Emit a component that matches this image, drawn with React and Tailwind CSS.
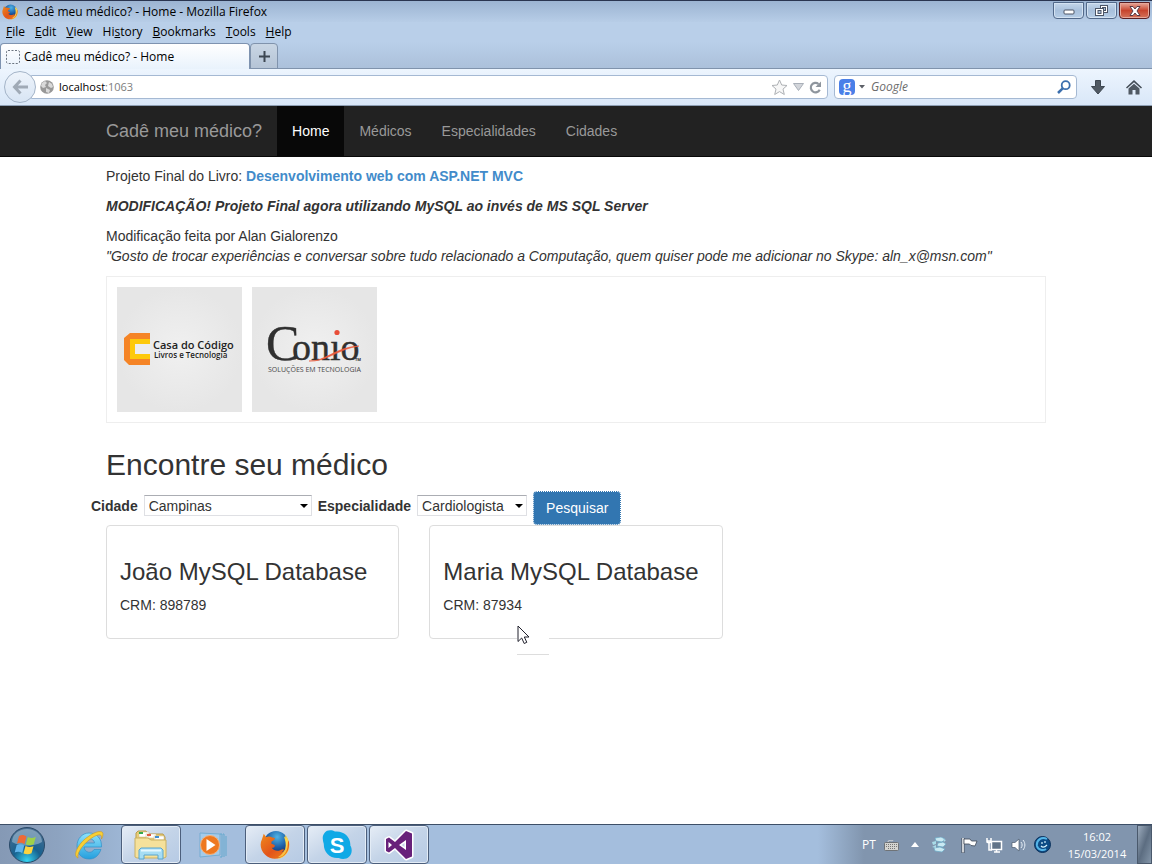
import React from "react";

const ui = "font-['Open_Sans','Noto_Sans',sans-serif]";

function FirefoxIcon({ className }) {
  return (
    <svg viewBox="0 0 32 32" className={className} aria-hidden="true">
      <defs>
        <radialGradient id="globe" cx="55%" cy="25%" r="70%">
          <stop offset="0" stopColor="#4fb4e6" />
          <stop offset="0.6" stopColor="#1d5fa8" />
          <stop offset="1" stopColor="#12306b" />
        </radialGradient>
        <linearGradient id="fox" x1="0" y1="0" x2="1" y2="1">
          <stop offset="0" stopColor="#f08a1c" />
          <stop offset="0.55" stopColor="#e2541a" />
          <stop offset="1" stopColor="#f0841d" />
        </linearGradient>
      </defs>
      <circle cx="17" cy="14" r="13" fill="url(#globe)" />
      <path d="M27 5c4 5 5 10 4 15-1.500 6-7 11-14 11 7-2 10-6 10.500-11 .4-5-.5-9-2-13l1.500 1z" fill="#fbd44a" />
      <path d="M4 4l2.500 3.500C8.500 6.500 11 6.500 13 8l3 .5c-.5 2-2 3-3.500 3.500l-.5 2.500 3.500 1.500c1 2-1 3-3 3 2 3 6 4 9 2.500 2-1 3.500-1.500 4-.5-.5 1.500-2 2-3 3 3.500-1 6-4 6.500-8l1.500-5c1.500 6 0 12-4.500 16-6 5-15 5-20.500-.5C.5 21.500-.5 15 2 10z" fill="url(#fox)" />
      <path d="M28 8c3 7 2 14-3 19-2 1.500-4 2-6 2 5-3 8-7 8.500-12z" fill="#fcd94f" opacity="0.8" />
    </svg>
  );
}

function WindowControls() {
  const base = "flex h-[17px] w-[31px] items-center justify-center rounded-b-sm border";
  return (
    <div className="flex gap-[2px] self-start pt-px">
      <button aria-label="Minimize" className={`${base} border-[#52698a] bg-gradient-to-b from-[#c4d6ea] via-[#a8c0dc] to-[#b6cde6] shadow-[inset_0_0_0_1px_#d3e2f2]`}>
        <svg className="mt-[3px]" width="12" height="6" viewBox="0 0 12 6"><rect x="1" y="1" width="10" height="4" rx="1" fill="#fff" stroke="#4c5566" /></svg>
      </button>
      <button aria-label="Restore" className={`${base} border-[#52698a] bg-gradient-to-b from-[#c4d6ea] via-[#a8c0dc] to-[#b6cde6] shadow-[inset_0_0_0_1px_#d3e2f2]`}>
        <svg width="13" height="12" viewBox="0 0 13 12" stroke="#4c5566" fill="#fff">
          <rect x="5.500" y="0.500" width="7" height="7" /><rect x="7.500" y="2.500" width="3" height="3" fill="#a8c0dc" />
          <rect x="0.500" y="3.500" width="8" height="7" /><rect x="3" y="5.500" width="3" height="3" fill="#a8c0dc" />
        </svg>
      </button>
      <button aria-label="Close" className={`${base} border-[#5a1f23] bg-gradient-to-b from-[#e5a598] via-[#c7442e] to-[#d4725a] shadow-[inset_0_0_0_1px_#e6a89b]`}>
        <svg width="12" height="10" viewBox="0 0 12 10">
          <path d="M1 .5h3l2 2.500L8 .5h3L8 5l3 4.500H8L6 7 4 9.500H1L4 5z" fill="#fff" stroke="#583a45" />
        </svg>
      </button>
    </div>
  );
}

const menuItems = [["", "F", "ile"], ["", "E", "dit"], ["", "V", "iew"], ["Hi", "s", "tory"], ["", "B", "ookmarks"], ["", "T", "ools"], ["", "H", "elp"]];

function BrowserChrome() {
  return (
    <header className={`${ui} border-b border-[#8e9fb4] bg-[#b9cfe9] text-xs text-black`}>
      <div className="flex h-[22px] items-center border-t border-[#2a3550] bg-gradient-to-b from-[#9cb4d2] to-[#b7cde7] pr-[2px] pl-[2px]">
        <FirefoxIcon className="h-4 w-4" />
        <span className="ml-2 flex-1">Cadê meu médico? - Home - Mozilla Firefox</span>
        <WindowControls />
      </div>
      <nav aria-label="Menu" className="flex h-5 items-center gap-[10px] pl-[6px]">
        {menuItems.map(([a, k, b]) => (
          <button key={k + b} className="leading-5">{a}<u className="underline-offset-1">{k}</u>{b}</button>
        ))}
      </nav>
      <div className="flex h-[27px] items-end bg-gradient-to-b from-[#b9cfe9] to-[#abc0da] shadow-[inset_0_-1px_0_#8093ac]">
        <button className="flex h-[26px] w-[250px] items-center gap-1 rounded-t border border-b-0 border-[#7e93b0] bg-gradient-to-b from-white to-[#e9f2fc] pl-[5px] text-left">
          <svg width="14" height="14" viewBox="0 0 14 14"><rect x="0.500" y="0.500" width="13" height="13" rx="1.500" fill="none" stroke="#6b7480" strokeDasharray="2 1.500" /></svg>
          Cadê meu médico? - Home
        </button>
        <button aria-label="New tab" className="flex h-[26px] w-7 items-center justify-center rounded-t border border-[#8093ac] bg-gradient-to-b from-[#c9d6e4] to-[#b5c4d6]">
          <svg width="11" height="11" viewBox="0 0 11 11"><path d="M5.500 0v11M0 5.500h11" stroke="#3d4752" strokeWidth="2" /></svg>
        </button>
      </div>
      <div className="flex h-9 items-center bg-gradient-to-b from-[#edf5fe] to-[#d9e7f8] pr-[10px] pl-1 text-[11px]">
        <button aria-label="Back" className="z-10 flex h-8 w-8 shrink-0 items-center justify-center rounded-full border border-[#a4b4c8] bg-gradient-to-b from-[#eef4fb] to-[#d8e5f4]">
          <svg width="17" height="16" viewBox="0 0 17 16"><path d="M8.500 1.500L2.500 8l6 6.500M3 8h13" fill="none" stroke="#a0aab6" strokeWidth="3" /></svg>
        </button>
        <div className="-ml-[5px] flex h-6 flex-1 items-center rounded-r-sm border border-[#a5b9d3] bg-white pr-[5px] pl-2">
          <svg width="14" height="14" viewBox="0 0 14 14">
            <circle cx="7" cy="7" r="6.800" fill="#989898" />
            <path d="M2 3l3-2 2 2-2 2 1 2-3 1-2-2zM9 2l3 2 1 3-2 1-3-2zM6 8l4 2-1 3-3-1z" fill="#d9d9d9" />
          </svg>
          <div className="relative ml-[5px] h-5 flex-1">
            <input aria-label="Address" defaultValue="localhost:1063" className="h-5 w-full bg-transparent text-transparent caret-black outline-none" />
            <span aria-hidden="true" className="pointer-events-none absolute inset-0 leading-5">localhost<span className="text-[#7d7d7d]">:1063</span></span>
          </div>
          <div className="flex items-center gap-[5px]">
            <svg width="17" height="17" viewBox="0 0 17 17"><path d="M8.500 1l2.200 5 5.300.5-4 3.600 1.300 5.400-4.800-2.900-4.800 2.900L5 10.100 1 6.500 6.300 6z" fill="#f7f7f7" stroke="#aeb1b5" /></svg>
            <svg width="11" height="8" viewBox="0 0 11 8"><path d="M.5.5h10l-5 7z" fill="#d2d5da" stroke="#a9afb8" /></svg>
            <svg width="13" height="13" viewBox="0 0 13 13"><path d="M10.700 8.700A4.700 4.700 0 1 1 9.500 3" fill="none" stroke="#8e959d" strokeWidth="2.200" /><path d="M12 .5V6H6.500z" fill="#8e959d" /></svg>
          </div>
        </div>
        <div className="ml-[6px] flex h-6 w-[243px] items-center rounded-sm border border-[#a5b9d3] bg-white pr-[5px] pl-1">
          <span className="flex h-4 w-4 items-center justify-center rounded-sm bg-[#4a7fe8] pb-[3px] font-['Liberation_Serif',serif] text-[18px] leading-3 text-white">g</span>
          <svg className="ml-1" width="6" height="4" viewBox="0 0 6 4"><path d="M0 0h6L3 3.500z" fill="#5c6067" /></svg>
          <input aria-label="Search" placeholder="Google" className="ml-[6px] w-full min-w-0 flex-1 text-xs italic outline-none placeholder:text-[#6c6c6c]" />
          <svg width="14" height="14" viewBox="0 0 14 14" fill="none" stroke="#3b6fae"><circle cx="8.700" cy="5.200" r="4" strokeWidth="1.800" /><path d="M5.700 8.300L1 13" strokeWidth="2.500" /></svg>
        </div>
        <button aria-label="Downloads" className="ml-[14px]"><svg width="14" height="15" viewBox="0 0 14 15"><path d="M4.500.5h5v6h4L7 14 .5 6.500h4z" fill="#505963" stroke="#3e4751" /></svg></button>
        <button aria-label="Home page" className="ml-[21px]"><svg width="16" height="15" viewBox="0 0 16 15"><path d="M8 0l8 7.500-1 1L8 2.300 1 8.500l-1-1z" fill="#434c56" /><path d="M2.500 8.500L8 3.800l5.500 4.700v6H9.500V10h-3v4.500h-4z" fill="#505963" /></svg></button>
      </div>
    </header>
  );
}

function CasaDoCodigo() {
  return (
    <svg width="125" height="125" viewBox="0 0 125 125" role="img" aria-label="Casa do Código">
      <defs><radialGradient id="tile"><stop offset="0" stopColor="#f0f0f0" /><stop offset="1" stopColor="#e6e6e6" /></radialGradient></defs>
      <rect width="125" height="125" fill="url(#tile)" />
      <path d="M13 46h20v32H12l-5-5V51z" fill="#f58426" />
      <path d="M13 52h20v20H13z" fill="#fdc90a" />
      <path d="M18 57h16v10H18z" fill="#ededed" />
      <text x="36" y="62" fontFamily="Open Sans, Noto Sans, sans-serif" fontSize="11" fontWeight="600" fill="#1d1d1d">Casa do Código</text>
      <text x="37" y="71" fontFamily="Open Sans, Noto Sans, sans-serif" fontSize="8" fontWeight="600" fill="#1d1d1d">Livros e Tecnologia</text>
    </svg>
  );
}

function Conio() {
  return (
    <svg width="125" height="125" viewBox="0 0 125 125" role="img" aria-label="Conio">
      <rect width="125" height="125" fill="url(#tile)" />
      <text y="73" fontFamily="Liberation Serif, serif" fill="#303030" stroke="#303030" strokeWidth="0.400">
        <tspan x="14" fontSize="50">C</tspan>
        <tspan x="40" fontSize="38">onıo</tspan>
      </text>
      <circle cx="85" cy="45.500" r="2.600" fill="#e84e38" />
      <path d="M57 74c16 1 26-14 50-15-21 3-32 16-50 15z" fill="#ec5a3c" stroke="#ec5a3c" strokeWidth="0.600" />
      <text x="103" y="74" fontFamily="Open Sans, sans-serif" fontSize="4" fontWeight="700" fill="#303030">TM</text>
      <text x="16" y="85" fontFamily="Open Sans, sans-serif" fontSize="7" fill="#484848">SOLUÇÕES EM TECNOLOGIA</text>
    </svg>
  );
}

function SelectField({ id, label, options, width }) {
  return (
    <>
      <label htmlFor={id} className="font-bold">{label}</label>
      <div className={`relative h-[21px] ${width}`}>
        <select id={id} className="block h-full w-full appearance-none border border-[#dfe0e4] border-t-[#abadb3] bg-white pl-1 leading-4 outline-none">
          {options.map((o) => <option key={o}>{o}</option>)}
        </select>
        <svg className="pointer-events-none absolute top-[9px] right-1" width="8" height="4" viewBox="0 0 8 4"><path d="M0 0h8L4 4z" fill="#000" /></svg>
      </div>
    </>
  );
}

function DoctorCard({ name, crm, children }) {
  return (
    <article className="relative rounded border border-[#ddd] p-[13px]">
      <h3 className="mt-5 mb-[10px] text-2xl leading-[26px] whitespace-nowrap">{name}</h3>
      <p className="mb-[10px]">CRM: {crm}</p>
      {children}
    </article>
  );
}

function Pointer() {
  return (
    <div className="pointer-events-none absolute top-[99px] left-[87px] h-[30px] w-8 border-b border-[#ddd] bg-white">
      <svg width="13" height="20" viewBox="0 0 13 20"><path d="M1 1v15.500l3.700-3.500 2.500 5.500 2.600-1.200L7.300 12H12z" fill="#fff" stroke="#20202c" /></svg>
    </div>
  );
}

function Page() {
  const link = "flex items-center px-[15px] text-[#999]";
  return (
    <div className="flex-1 bg-white font-['Liberation_Sans',Arial,sans-serif] text-sm leading-5 text-[#333]">
      <nav className="border-b border-[#080808] bg-[#222]">
        <div className="mx-auto flex h-[50px] max-w-[970px]">
          <a href="#" className="flex items-center px-[15px] text-lg text-[#999]">Cadê meu médico?</a>
          <a href="#" className="flex items-center bg-[#080808] px-[15px] text-white">Home</a>
          <a href="#" className={link}>Médicos</a>
          <a href="#" className={link}>Especialidades</a>
          <a href="#" className={link}>Cidades</a>
        </div>
      </nav>
      <main className="mx-auto max-w-[970px] px-[15px] pt-[9px] pb-8">
        <p className="mb-[10px]">Projeto Final do Livro: <a href="#" className="font-bold text-[#428bca]">Desenvolvimento web com ASP.NET MVC</a></p>
        <p className="mb-[10px] font-bold italic">MODIFICAÇÃO! Projeto Final agora utilizando MySQL ao invés de MS SQL Server</p>
        <p className="mb-[10px]">Modificação feita por Alan Gialorenzo<br /><em>"Gosto de trocar experiências e conversar sobre tudo relacionado a Computação, quem quiser pode me adicionar no Skype: aln_x@msn.com"</em></p>
        <div className="flex gap-[10px] border border-[#eee] p-[10px]">
          <CasaDoCodigo />
          <Conio />
        </div>
        <h2 className="mt-[25px] mb-[10px] text-3xl leading-[33px]">Encontre seu médico</h2>
        <form className="-mx-[15px] flex h-[34px] items-start gap-[6px]" onSubmit={(e) => e.preventDefault()}>
          <div className="flex items-center gap-[6px] pt-1">
            <SelectField id="cidade" label="Cidade" options={["Campinas"]} width="w-[168px]" />
            <SelectField id="especialidade" label="Especialidade" options={["Cardiologista"]} width="w-[110px]" />
          </div>
          <button type="submit" className="h-[34px] rounded border border-dotted border-white bg-[#3276b1] px-3 text-white">Pesquisar</button>
        </form>
        <div className="grid grid-cols-3 gap-[30px]">
          <DoctorCard name="João MySQL Database" crm="898789" />
          <DoctorCard name="Maria MySQL Database" crm="87934"><Pointer /></DoctorCard>
        </div>
      </main>
    </div>
  );
}

function Orb() {
  return (
    <svg width="36" height="36" viewBox="0 0 36 36">
      <defs>
        <radialGradient id="orb" cx="50%" cy="95%" r="90%"><stop offset="0" stopColor="#35d5f2" /><stop offset="0.45" stopColor="#17618f" /><stop offset="1" stopColor="#4a6f92" /></radialGradient>
      </defs>
      <circle cx="18" cy="18" r="17.500" fill="url(#orb)" stroke="#2a4a68" />
      <path d="M3 15a15 13 0 0 1 30 0c-9 5-21 5-30 0z" fill="#d5e6f3" opacity="0.4" />
      <path d="M10 9c3-1.500 5-1 7.500.5l-2 7.500c-3-1.500-5-1.500-7.500-.5z" fill="#ee6a35" />
      <path d="M18.800 10c3 1.500 5.500 1.200 8-.2l-2 7.500c-3 1.200-5 1.200-8 .2z" fill="#9ed04a" />
      <path d="M7.700 18c2.500-1 5-.8 7.500.5l-2 7.500c-2.500-1.500-5-1.500-7.500-.5z" fill="#61b5ec" />
      <path d="M16.500 19c3 1.200 5 1.200 8 .2l-2 7c-2.500 1.500-5 1.300-8 .3z" fill="#fbd33e" />
    </svg>
  );
}

function IeIcon() {
  return (
    <svg width="32" height="32" viewBox="0 0 32 32">
      <defs><linearGradient id="ie" x1="0" y1="0" x2="0" y2="1"><stop offset="0" stopColor="#8fe2fb" /><stop offset="1" stopColor="#249fde" /></linearGradient></defs>
      <path d="M16 4c8 0 13 6 12.500 14H11c.5 6 8 7 10 2.500h7C25 28 21 30 16 30 8 30 4 24 4 17S9 4 16 4zm-5 10h10.500C21 8.500 12 8 11 14z" fill="url(#ie)" stroke="#3290c8" strokeWidth="0.700" fillRule="evenodd" />
      <path d="M5 29C-1 27 5 14 16 7 23 2 30 1 30 5c0 2-.5 3-1.500 5 .5-4-1-5-5-3.500C15 9.500 3 23 5 29z" fill="#f9cf35" stroke="#c99720" strokeWidth="0.600" />
    </svg>
  );
}

function FolderIcon() {
  return (
    <svg width="34" height="32" viewBox="0 0 34 32">
      <path d="M2 26V4l2-2h8l2 3h15l2 3v18z" fill="#e9cd76" stroke="#b99c4c" />
      <path d="M5 3h10v5H5zM12 5h10v4H12zM20 7h10v4H20z" fill="#fff" stroke="#c8bb8a" strokeWidth="0.500" />
      <path d="M5 3h4v2H5z" fill="#34a94b" /><path d="M13 5h4v2h-4z" fill="#e2583e" /><path d="M21 7h4v2h-4z" fill="#3f8ed0" />
      <path d="M1 9l13 0 3 2h15v17l-2 1H3l-2-1z" fill="#f5e19b" stroke="#cbb163" />
      <path d="M5 30V21l2-2h20l2 2v9h-5v-4H10v4z" fill="#a6ddf4" stroke="#58a5cf" />
      <path d="M7 21.500h20" stroke="#e4f7ff" strokeWidth="2" />
    </svg>
  );
}

function MediaIcon() {
  return (
    <svg width="30" height="28" viewBox="0 0 30 28">
      <path d="M2 2l20 1v21L2 26z" fill="#a4cbea" stroke="#75add2" />
      <path d="M22 3h2v23h-2M25 3h1v23M28 5v20" fill="none" stroke="#62a8cd" />
      <circle cx="12" cy="14" r="9.500" fill="#ee7820" stroke="#f6b17a" />
      <path d="M8.500 8v12l9-6z" fill="#fff" />
    </svg>
  );
}

function SkypeIcon() {
  return (
    <svg width="30" height="30" viewBox="0 0 30 30">
      <path d="M2.500 3C5-.5 10 0 13 1.500c8-1 16 5 15.300 14 2 3 2 8-1 11-3 3-7.500 3-10.500 1.500C8 29 1.500 22 1.800 14 .5 10 0 6 2.500 3z" fill="#10a9e6" />
      <text x="15" y="22.500" textAnchor="middle" fontFamily="Liberation Sans, sans-serif" fontWeight="700" fontSize="22" fill="#fff">S</text>
    </svg>
  );
}

function StudioIcon() {
  return (
    <svg width="32" height="32" viewBox="0 0 32 32">
      <path d="M3 10l3-1.500 6 4.500L23 2l6 2.500v23L23 30 12 19l-6 4.500L3 22zM5.500 13v6L9 16zM23 11l-7 5 7 5z" fill="#68217a" stroke="#fff" strokeWidth="3" strokeLinejoin="round" paintOrder="stroke" fillRule="evenodd" />
    </svg>
  );
}

function TaskButton({ label, active, children }) {
  return (
    <button aria-label={label} className={`flex h-full w-[60px] items-center justify-center rounded-sm border ${active ? "border-[#4c5f7c] bg-gradient-to-br from-[#e6edf6] via-[#c4d4e8] to-[#b6cae4] shadow-[inset_0_0_0_1px_#e3ecf6]" : "border-transparent"}`}>
      {children}
    </button>
  );
}

function Tray() {
  return (
    <div className="flex h-full items-center text-xs text-white">
      <span className="w-[22px]">PT</span>
      <svg width="15" height="12" viewBox="0 0 15 12"><path d="M4 3c0-3 5 0 5-2" fill="none" stroke="#ddd" /><rect x="0.500" y="3.500" width="14" height="8" rx="1" fill="#d4d4d0" stroke="#6f7377" /><path d="M2 5.500h11M2 7.500h11M4 9.500h7" stroke="#777" strokeDasharray="1 1" /></svg>
      <svg className="ml-3" width="8" height="5" viewBox="0 0 8 5"><path d="M0 5l4-5 4 5z" fill="#fff" /></svg>
      <svg className="ml-[12px]" width="17" height="16" viewBox="0 0 17 16"><path d="M4 1l6-1 4 2-3 3-6-1zM7 6l5-1 3 2-3 3-6-1zM3 11l6-1 5 2-3 3-7-1z" fill="#c9e9f2" stroke="#6aa9c5" strokeWidth="0.700" /><path d="M1 5l4-1v3l-3 1zM1 10l4-2v3zM12 2l3 1-2 2z" fill="#a9dbe8" /></svg>
      <svg className="ml-[13px]" width="17" height="16" viewBox="0 0 17 16"><path d="M2 1v15" stroke="#3c4757" strokeWidth="3" /><path d="M2 1v14.500" stroke="#fff" strokeWidth="1.500" /><path d="M3 2h6l1.500 2H16l-2 5-4-.5-1.500-1.500H3z" fill="#fff" stroke="#3c4757" strokeWidth="0.800" /></svg>
      <svg className="ml-2" width="17" height="16" viewBox="0 0 17 16"><path d="M5.500 4.500h10v8h-10zM8 15h6M10.500 13v2" fill="#627489" stroke="#fff" strokeWidth="1.500" /><path d="M1 1v4l2 1v7h3M5 1v4L3 6M.5 4h5" fill="none" stroke="#fff" strokeWidth="1.500" /></svg>
      <svg className="ml-2" width="15" height="14" viewBox="0 0 15 14"><path d="M1 4.500h3L8 1v12L4 9.500H1z" fill="#fff" stroke="#4a596c" strokeWidth="0.700" /><path d="M10 4c1.500 2 1.500 4 0 6M12 2c2.500 3 2.500 7 0 10" fill="none" stroke="#e8f0f8" /></svg>
      <svg className="ml-2" width="17" height="17" viewBox="0 0 17 17"><circle cx="8.500" cy="8.500" r="8" fill="#0e4c85" stroke="#0b315c" /><path d="M13 3C8 0 2 4 3 10c1 4 6 5 9 3" fill="none" stroke="#55b5e8" strokeWidth="2" /><path d="M8 6v2M11 5v2M7 10c2 2 4 1 6-1" fill="none" stroke="#d7f5ff" strokeWidth="1.200" /></svg>
      <time className="ml-4 w-[60px] text-center text-[11px] leading-[17px]">16:02<br />15/03/2014</time>
      <button aria-label="Show desktop" className="ml-[10px] h-full w-[15px] border border-[#4a596c] bg-gradient-to-br from-[#9cabbc] via-[#5c6d81] to-[#8496a9]" />
    </div>
  );
}

export default function App() {
  return (
    <div className="flex min-h-screen flex-col bg-white">
      <BrowserChrome />
      <Page />
      <footer className={`${ui} flex h-10 items-center justify-between border-t border-[#3d4f67] bg-[linear-gradient(to_right,#8599b5_0%,#8da3c0_5%,#a4bedd_13%,#a4bedd_70%,#a4bedd_71%,#8195ae_75%)]`}>
        <div className="flex h-full items-center gap-[2px]">
          <button aria-label="Start" className="mr-3 ml-[9px]"><Orb /></button>
          <TaskButton label="Internet Explorer"><IeIcon /></TaskButton>
          <TaskButton label="Explorer" active><FolderIcon /></TaskButton>
          <TaskButton label="Media Player"><MediaIcon /></TaskButton>
          <TaskButton label="Firefox" active><FirefoxIcon className="h-[30px] w-[30px]" /></TaskButton>
          <TaskButton label="Skype" active><SkypeIcon /></TaskButton>
          <TaskButton label="Visual Studio" active><StudioIcon /></TaskButton>
        </div>
        <Tray />
      </footer>
    </div>
  );
}
